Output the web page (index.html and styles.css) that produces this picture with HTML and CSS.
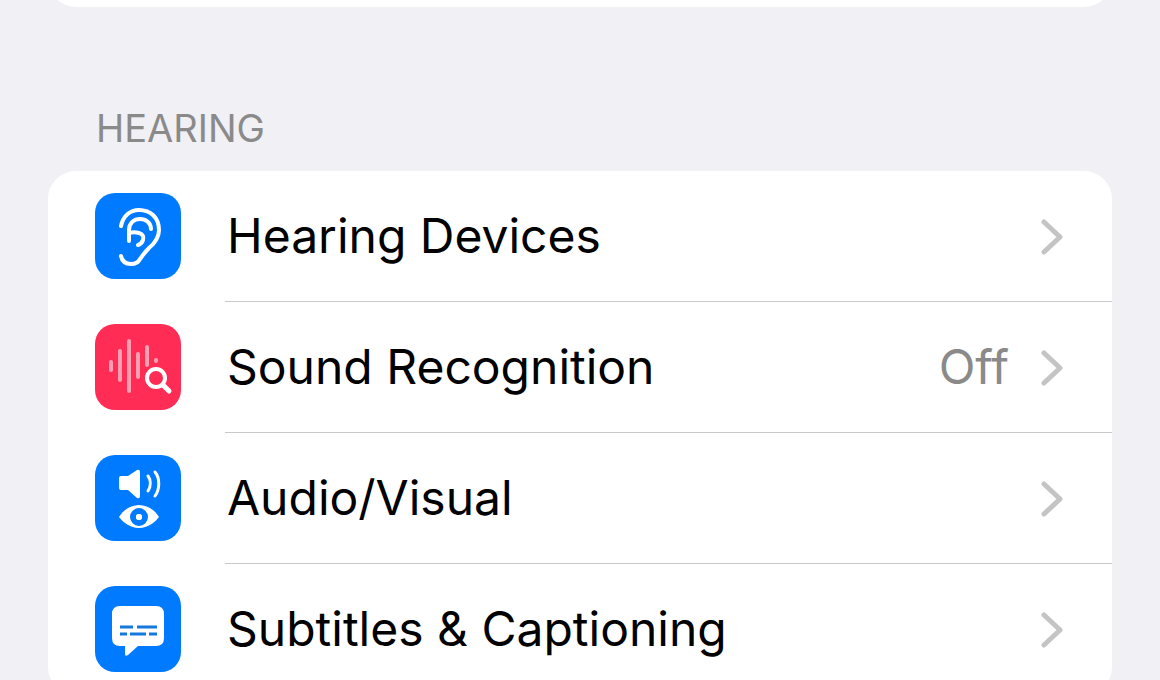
FILE: index.html
```html
<!DOCTYPE html>
<html lang="en">
<head>
  <meta charset="utf-8">
  <title>Accessibility</title>
  <link rel="stylesheet" href="styles.css">
</head>
<body>
  <main class="settings">
    <div class="card previous"></div>

    <section>
      <h2>HEARING</h2>
      <ul class="card">
        <li>
          <a class="row" href="#hearing-devices">
            <svg class="icon blue" viewBox="0 0 86 86" aria-hidden="true">
              <g fill="none" stroke="#fff" stroke-width="4" stroke-linecap="round" stroke-linejoin="round">
                <path d="M26 33C28 23 35 17 44 17c12 0 20 8 20 20 0 8-4 13-10 18-4 4-6 7-9 11-2 4-5 5-9 5-6 0-9-3-10-8"/>
                <path d="M34 48V37c0-7 5-11 11-11s11 4 11 10M34 40c3-1 7-1 10 0 4 1 5 4 4 7-1 3-2 4-5 5"/>
              </g>
            </svg>
            <span class="body">
              <span class="label">Hearing Devices</span>
              <svg class="chevron" viewBox="0 0 22 36" aria-hidden="true"><path d="M3 3l16 15L3 33"/></svg>
            </span>
          </a>
        </li>
        <li>
          <a class="row" href="#sound-recognition">
            <svg class="icon red" viewBox="0 0 86 86" aria-hidden="true">
              <path d="M16 38v8M25 27v29M34 17v50M43 30v23M52 23v18M61 36v1" fill="none" stroke="#ff9fb1" stroke-width="4" stroke-linecap="round"/>
              <circle cx="61" cy="54" r="12" fill="#ff2d55"/>
              <circle cx="61" cy="54" r="9" fill="none" stroke="#fff" stroke-width="4"/>
              <path d="M68 61l6 6" stroke="#fff" stroke-width="5" stroke-linecap="round"/>
            </svg>
            <span class="body">
              <span class="label">Sound Recognition</span>
              <span class="value">Off</span>
              <svg class="chevron" viewBox="0 0 22 36" aria-hidden="true"><path d="M3 3l16 15L3 33"/></svg>
            </span>
          </a>
        </li>
        <li>
          <a class="row" href="#audio-visual">
            <svg class="icon blue" viewBox="0 0 86 86" aria-hidden="true">
              <path d="M26 21h7l9-6q3-1 3 2v24q0 3-3 2l-9-8h-7q-2 0-2-2V23q0-2 2-2z" fill="#fff"/>
              <path d="M53 21c3 4 3 10 0 15M60 17c5 6 5 17 0 24" fill="none" stroke="#fff" stroke-width="3" stroke-linecap="round"/>
              <path d="M24 62c3-5 10-12 20-12s17 7 20 12c-3 4-10 11-20 11S27 66 24 62z" fill="#fff"/>
              <circle cx="44" cy="62" r="6" fill="#fff" stroke="#007aff" stroke-width="6"/>
              <circle cx="44" cy="62" r="3" fill="#fff"/>
            </svg>
            <span class="body">
              <span class="label">Audio/Visual</span>
              <svg class="chevron" viewBox="0 0 22 36" aria-hidden="true"><path d="M3 3l16 15L3 33"/></svg>
            </span>
          </a>
        </li>
        <li>
          <a class="row" href="#subtitles">
            <svg class="icon blue" viewBox="0 0 86 86" aria-hidden="true">
              <path d="M25 20h36q8 0 8 8v24q0 8-8 8H43l-10 9q-3 2-3-1v-8h-5q-8 0-8-8V28q0-8 8-8z" fill="#fff"/>
              <path d="M25 41h13M42 41h20M25 48h7M35 48h16M54 48h8" fill="none" stroke="#1478dc" stroke-width="3"/>
            </svg>
            <span class="body">
              <span class="label">Subtitles &amp; Captioning</span>
              <svg class="chevron" viewBox="0 0 22 36" aria-hidden="true"><path d="M3 3l16 15L3 33"/></svg>
            </span>
          </a>
        </li>
      </ul>
    </section>
  </main>
</body>
</html>
```
FILE: styles.css
```css
* {
  box-sizing: border-box;
}
body {
  margin: 0;
  height: 100vh;
  overflow: hidden;
  background: #f1f0f5;
  font-family: Inter, "Liberation Sans", sans-serif;
}
.settings {
  display: flow-root;
  padding: 0 48px;
}
.card {
  margin: 0;
  padding: 0;
  list-style: none;
  background: #fff;
  border-radius: 28px;
}
/* bottom edge of the group above, scrolled almost out of view */
.previous {
  height: 131px;
  margin-top: -124px;
}
h2 {
  margin: 0;
  padding: 98px 48px 20px;
  font-size: 38px;
  line-height: 46px;
  font-weight: 400;
  color: #8a8a8a;
}
.row {
  display: flex;
  align-items: center;
  gap: 44px;
  padding-left: 47px;
  color: #000;
  text-decoration: none;
}
.icon {
  flex: none;
  width: 86px;
  height: 86px;
  margin-bottom: 2px;
  border-radius: 20px;
}
.blue {
  background: #007aff;
}
.red {
  background: #ff2d55;
}
.body {
  flex: 1;
  display: flex;
  align-items: center;
  height: 131px;
  padding: 0 49px 0 2px;
  border-bottom: 1px solid #c8c8c8;
}
li:last-child .body {
  border-color: transparent;
}
.label {
  flex: 1;
  font-size: 48px;
  line-height: 60px;
}
.value {
  margin-right: 32px;
  font-size: 48px;
  line-height: 60px;
  color: #8a8a8a;
}
.chevron {
  width: 22px;
  height: 36px;
  margin-top: 2px;
  fill: none;
  stroke: #c4c4c4;
  stroke-width: 5;
  stroke-linecap: round;
  stroke-linejoin: round;
}
```
